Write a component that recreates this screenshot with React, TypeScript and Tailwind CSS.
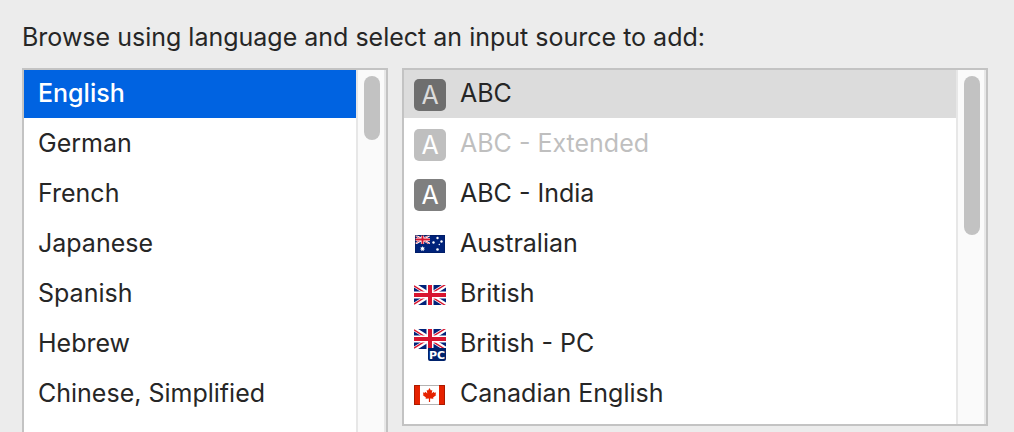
import { useState } from "react";

type IconKind = "letter" | "australia" | "britain" | "britain-pc" | "canada";

type InputSource = {
  name: string;
  icon: IconKind;
  disabled?: boolean;
};

const languages = ["English", "German", "French", "Japanese", "Spanish", "Hebrew", "Chinese, Simplified"];

const sources: InputSource[] = [
  { name: "ABC", icon: "letter" },
  { name: "ABC - Extended", icon: "letter", disabled: true },
  { name: "ABC - India", icon: "letter" },
  { name: "Australian", icon: "australia" },
  { name: "British", icon: "britain" },
  { name: "British - PC", icon: "britain-pc" },
  { name: "Canadian English", icon: "canada" },
];

// Union flag on a 32x20 field
function UnionFlag() {
  return (
    <>
      <rect width="32" height="20" fill="#00227a" />
      <path d="M0 0L32 20M32 0L0 20" stroke="#fff" strokeWidth="4.4" />
      <path d="M0 0L16 10M32 20L16 10" stroke="#d8152f" strokeWidth="1.4" transform="translate(0 .8)" />
      <path d="M32 0L16 10M0 20L16 10" stroke="#d8152f" strokeWidth="1.4" transform="translate(0 -.8)" />
      <path d="M16 0V20M0 10H32" stroke="#fff" strokeWidth="7" />
      <path d="M16 0V20M0 10H32" stroke="#d8152f" strokeWidth="4" />
    </>
  );
}

function Flag({ kind }: { kind: IconKind }) {
  return (
    <svg viewBox="0 0 32 32" className="mt-0.5 size-8 shrink-0" aria-hidden="true">
      {kind === "australia" &&
        <g>
          <rect x="1" y="6" width="30" height="18" fill="#00227a" />
          <svg x="1" y="6" width="15" height="9" viewBox="0 0 32 20" preserveAspectRatio="none">
            <UnionFlag />
          </svg>
          <g fill="#fff">
            <path d="M8.5 17l.6 1.5 1.5-.5-.7 1.4 1.3.9-1.6.3.1 1.6-1.2-1-1.2 1 .1-1.6-1.6-.3 1.3-.9-.7-1.4 1.5.5z" />
            <circle cx="23.5" cy="9" r="1.2" />
            <circle cx="19.5" cy="13.5" r="1.2" />
            <circle cx="27.5" cy="12.5" r="1.2" />
            <circle cx="25.3" cy="15.5" r=".7" />
            <circle cx="23.5" cy="20.5" r="1.3" />
          </g>
          <rect x="1.5" y="6.5" width="29" height="17" fill="none" stroke="#001a5c" strokeOpacity=".6" />
        </g>
      }
      {kind === "britain" &&
        <svg y="6" width="32" height="20" viewBox="0 0 32 20"><UnionFlag /></svg>
      }
      {kind === "britain-pc" &&
        <g>
          <svg width="32" height="20" viewBox="0 0 32 20"><UnionFlag /></svg>
          <path d="M14 19H32V30a2 2 0 0 1-2 2H16a2 2 0 0 1-2-2z" fill="#00226c" />
          <text x="23" y="30" textAnchor="middle" fill="#fff" className="font-['DejaVu_Sans',sans-serif] text-[11px] font-bold">PC</text>
        </g>
      }
      {kind === "canada" &&
        <g>
          <rect y="6" width="31" height="20" fill="#fff" />
          <path d="M0 6.5H31M0 25.5H31" stroke="#b3b3b3" />
          <path d="M0 6H6V26H0zM25 6H31V26H25z" fill="#e62200" />
          <path d="M.5 6.5H6M.5 6.5V25.5H6M25 6.5H30.5V25.5H25" fill="none" stroke="#a81a00" />
          <path d="M15.5 9l1.4 2.5 1.4-.6-.6 3.7 1.9-1.8.5 1 2-.3-.6 1.9.8.5-3.2 2.7.3 1.2-3.3-.4V23h-1.2v-3.6l-3.3.4.3-1.2-3.2-2.7.8-.5-.6-1.9 2 .3.5-1 1.9 1.8-.6-3.7 1.4.6z" fill="#e62200" />
        </g>
      }
    </svg>
  );
}

function SourceIcon({ source, selected }: { source: InputSource; selected: boolean }) {
  if (source.icon !== "letter") {
    return <Flag kind={source.icon} />;
  }
  const colors = source.disabled ? "bg-[#bfbfbf] text-white" : selected ? "bg-[#6e6e6e] text-[#dcdcdc]" : "bg-[#7f7f7f] text-white";
  return (
    <span aria-hidden="true" className={`mt-0.5 flex size-8 shrink-0 items-center justify-center rounded-[5px] text-[25px] leading-8 ${colors}`}>
      A
    </span>
  );
}

function ScrollTrack({ thumb }: { thumb: string }) {
  return (
    <div className="w-[30px] shrink-0 border-x-2 border-[#e7e7e7] bg-[#fafafa] px-1.5 pt-1.5">
      <div className={`w-4 rounded-full bg-[#c2c2c2] ${thumb}`} />
    </div>
  );
}

export default function App() {
  const [language, setLanguage] = useState("English");
  const [sourceName, setSourceName] = useState("ABC");

  return (
    <main className="flex min-h-screen flex-col bg-[#ececec] pr-[26px] pl-[22px] font-[Inter,sans-serif] text-[25px] leading-8 text-[#262626] [font-optical-sizing:none]">
      <h1 className="pt-[21px] pb-[15px] whitespace-nowrap">Browse using language and select an input source to add:</h1>
      <div className="flex grow gap-3.5">
        <section aria-label="Languages" className="flex flex-[362] border-2 border-b-0 border-[#c3c3c3] bg-white">
          <ul className="flex min-w-0 grow flex-col gap-0.5">
            {languages.map((name) => (
              <li key={name}>
                <button
                  type="button"
                  aria-pressed={name === language}
                  onClick={() => setLanguage(name)}
                  className={`flex h-12 w-full items-center px-3.5 pb-0.5 whitespace-nowrap ${name === language ? "bg-[#0063e1] font-medium text-white" : ""}`}
                >
                  {name}
                </button>
              </li>
            ))}
          </ul>
          <ScrollTrack thumb="h-16" />
        </section>
        <section aria-label="Input sources" className="mb-1.5 flex flex-[582] border-2 border-[#c3c3c3] bg-white">
          <ul className="flex min-w-0 grow flex-col gap-0.5">
            {sources.map((source) => (
              <li key={source.name}>
                <button
                  type="button"
                  disabled={source.disabled}
                  aria-pressed={source.name === sourceName}
                  onClick={() => setSourceName(source.name)}
                  className={`flex h-12 w-full items-center gap-3.5 px-2.5 whitespace-nowrap disabled:text-[#bfbfbf] ${source.name === sourceName ? "bg-[#dcdcdc]" : ""}`}
                >
                  <SourceIcon source={source} selected={source.name === sourceName} />
                  <span className="pb-0.5">{source.name}</span>
                </button>
              </li>
            ))}
          </ul>
          <ScrollTrack thumb="h-[159px]" />
        </section>
      </div>
    </main>
  );
}
